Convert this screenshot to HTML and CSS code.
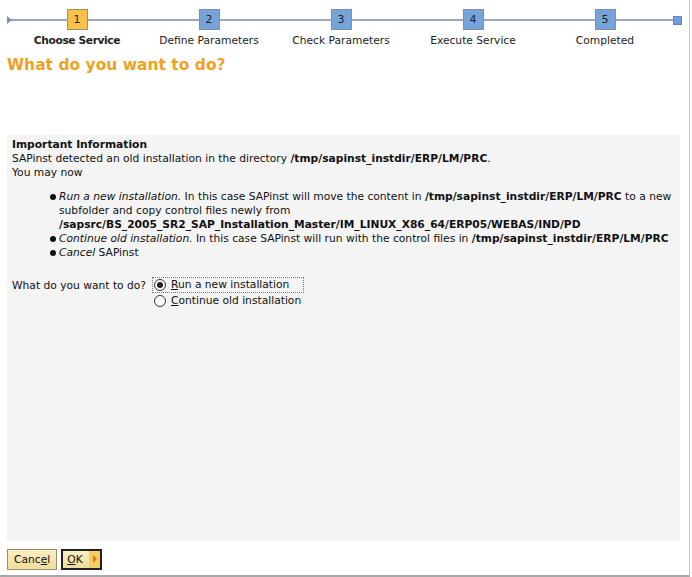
FILE: index.html
```html
<!DOCTYPE html>
<html>
<head>
<meta charset="utf-8">
<link rel="stylesheet" href="styles.css">
</head>
<body>
<div class="frame">
  <div class="stepbar">
    <div class="step active"><div class="num">1</div><div class="label">Choose Service</div></div>
    <div class="step"><div class="num">2</div><div class="label">Define Parameters</div></div>
    <div class="step"><div class="num">3</div><div class="label">Check Parameters</div></div>
    <div class="step"><div class="num">4</div><div class="label">Execute Service</div></div>
    <div class="step"><div class="num">5</div><div class="label">Completed</div></div>
  </div>
  <h1 class="title">What do you want to do?</h1>
  <div class="panel">
    <div class="info-head">Important Information</div>
    <div class="line">SAPinst detected an old installation in the directory <b>/tmp/sapinst_instdir/ERP/LM/PRC</b>.</div>
    <div class="line">You may now</div>
    <ul class="opts">
      <li><i>Run a new installation.</i> In this case SAPinst will move the content in <b>/tmp/sapinst_instdir/ERP/LM/PRC</b> to a new subfolder and copy control files newly from <b>/sapsrc/BS_2005_SR2_SAP_Installation_Master/IM_LINUX_X86_64/ERP05/WEBAS/IND/PD</b></li>
      <li class="nowrap"><i>Continue old installation.</i> In this case SAPinst will run with the control files in <b>/tmp/sapinst_instdir/ERP/LM/PRC</b></li>
      <li><i>Cancel</i> SAPinst</li>
    </ul>
    <div class="question">
      <div class="qlabel">What do you want to do?</div>
      <div class="radios">
        <label class="radio focus"><span class="dot checked"></span><span><u>R</u>un a new installation</span></label>
        <label class="radio"><span class="dot"></span><span><u>C</u>ontinue old installation</span></label>
      </div>
    </div>
  </div>
  <div class="buttons">
    <button class="btn cancel">Canc<u>e</u>l</button>
    <button class="btn ok"><span><u>O</u>K</span><span class="arrow"></span></button>
  </div>
</div>
</body>
</html>
```

FILE: styles.css
```css
html, body {
  margin: 0;
  padding: 0;
  background: #ffffff;
}
body {
  width: 692px;
  height: 577px;
  overflow: hidden;
  font-family: "DejaVu Sans", "Liberation Sans", sans-serif;
  font-size: 10.7px;
  color: #111;
}
.frame {
  width: 690px;
  height: 577px;
  border-right: 1px solid #c8c8c8;
  border-bottom: 2px solid #a8a8a8;
  display: flex;
  flex-direction: column;
  box-sizing: border-box;
}
.stepbar {
  position: relative;
  display: grid;
  grid-template-columns: repeat(5, 132px);
  padding: 9px 0 0 11px;
  height: 48px;
  box-sizing: border-box;
  background: linear-gradient(#9ea8ba, #9ea8ba) 8px 19px / 671px 2px no-repeat;
}
.stepbar::before {
  content: "";
  position: absolute;
  left: 7px;
  top: 16px;
  border-left: 5px solid #7f93b5;
  border-top: 4px solid transparent;
  border-bottom: 4px solid transparent;
}
.stepbar::after {
  content: "";
  position: absolute;
  left: 673px;
  top: 16px;
  width: 7px;
  height: 7px;
  background: #6f9ddb;
  border: 1px solid #6a85b0;
}
.step {
  display: flex;
  flex-direction: column;
  align-items: center;
  position: relative;
}
.num {
  width: 21px;
  height: 21px;
  box-sizing: border-box;
  background: #77a3db;
  border: 1px solid #7a8fae;
  display: flex;
  align-items: center;
  justify-content: center;
  font-size: 11px;
  color: #222;
}
.step.active .num {
  background: #f8c24a;
  border-color: #9a9070;
}
.label {
  margin-top: 4px;
  white-space: nowrap;
  font-size: 10.7px;
  color: #222;
}
.step.active .label {
  font-weight: bold;
  letter-spacing: -0.4px;
}
.title {
  margin: 0;
  padding: 8px 0 0 7px;
  font-size: 15.5px;
  font-weight: bold;
  color: #f0a11e;
  height: 87px;
  box-sizing: border-box;
}
.panel {
  margin: 0 9px 0 7px;
  background: #f4f4f4;
  padding: 3px 0 0 5px;
  height: 406px;
  box-sizing: border-box;
  line-height: 14px;
}
.info-head {
  font-weight: bold;
}
.opts {
  margin: 10px 0 0 0;
  padding: 0 0 0 47px;
  list-style: none;
}
.opts li {
  position: relative;
}
.opts li.nowrap {
  white-space: nowrap;
}
.opts li::before {
  content: "";
  position: absolute;
  left: -9px;
  top: 4px;
  width: 6px;
  height: 6px;
  border-radius: 50%;
  background: #111;
}
.question {
  display: flex;
  margin-top: 17px;
}
.qlabel {
  padding-top: 2px;
  width: 140px;
}
.radios {
  display: flex;
  flex-direction: column;
}
.radio {
  display: flex;
  align-items: center;
  gap: 5px;
  height: 14px;
  padding: 0 2px 0 1px;
  border: 1px dotted transparent;
}
.radio.focus {
  border-color: #777;
}
.dot {
  width: 10px;
  height: 10px;
  border: 1px solid #333;
  border-radius: 50%;
  background: #fff;
  position: relative;
}
.dot.checked::after {
  content: "";
  position: absolute;
  left: 2px;
  top: 2px;
  width: 6px;
  height: 6px;
  border-radius: 50%;
  background: #222;
}
.buttons {
  display: flex;
  gap: 4px;
  padding: 8px 0 0 7px;
}
.btn {
  font-family: "DejaVu Sans", "Liberation Sans", sans-serif;
  font-size: 10.7px;
  height: 21px;
  padding: 0 5px;
  border: 1px solid #9a8f6a;
  background: linear-gradient(#fbefc4, #f0dc9a);
  color: #111;
  display: flex;
  align-items: center;
}
.btn.cancel {
  padding: 0 6px;
}
.btn.ok {
  border: 2px solid #222;
  padding: 0 0 0 4px;
  gap: 6px;
}
.arrow {
  width: 11px;
  height: 17px;
  background: #f5cf62;
  position: relative;
}
.arrow::after {
  content: "";
  position: absolute;
  left: 4px;
  top: 4px;
  border-left: 4px solid #e07a10;
  border-top: 4px solid transparent;
  border-bottom: 4px solid transparent;
}
```
